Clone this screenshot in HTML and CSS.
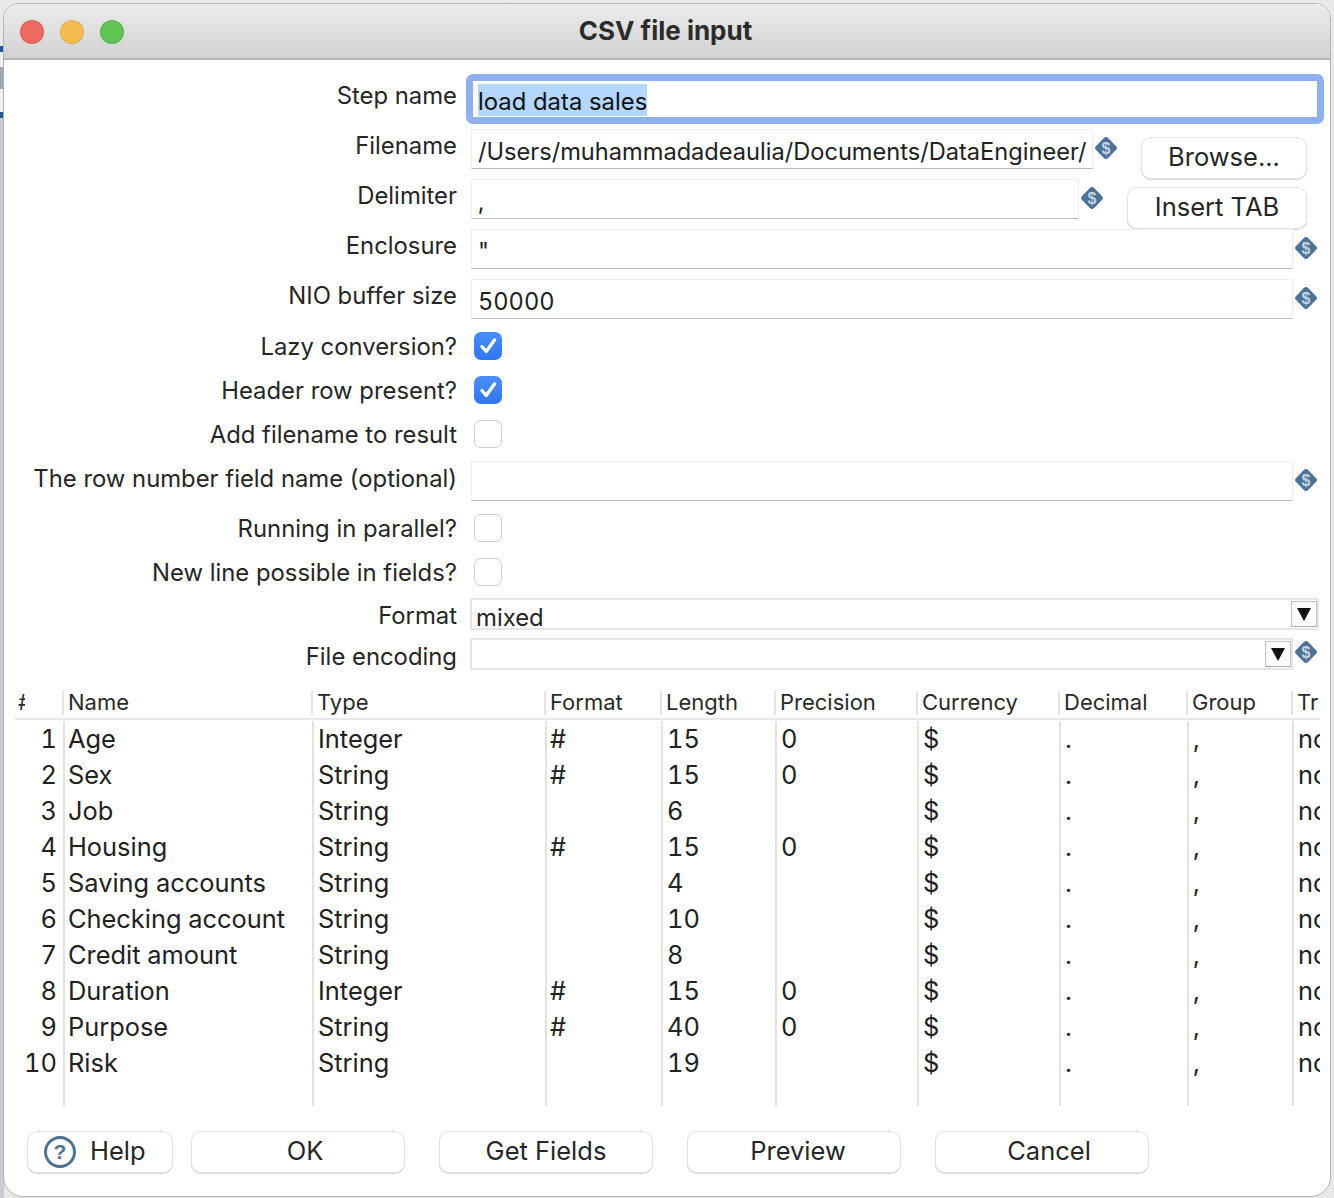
FILE: index.html
```html
<!DOCTYPE html>
<html lang="en">
<head>
<meta charset="utf-8">
<title>CSV file input</title>
<link rel="stylesheet" href="styles.css">
</head>
<body>
<div class="backdrop"><i class="bd-blue bd-a"></i><i class="bd-gray bd-b"></i><i class="bd-blue bd-c"></i><i class="bd-rest"></i></div>
<main class="window">
  <header class="titlebar">
    <div class="lights"><span class="light red"></span><span class="light yellow"></span><span class="light green"></span></div>
    <h1 class="title">CSV file input</h1>
  </header>
  <form class="form">
    <div class="row row-text">
      <label class="label">Step name</label>
      <div class="focus-ring"><span class="selected">load data sales</span></div>
    </div>
    <div class="row row-text row-btn">
      <label class="label">Filename</label>
      <div class="input">/Users/muhammadadeaulia/Documents/DataEngineer/</div>
      <svg class="var-icon" viewBox="0 0 26 26"><rect x="4.5" y="4.5" width="17" height="17" rx="3" transform="rotate(45 13 13)" fill="#4c7297"/><text x="13" y="18.6" text-anchor="middle" class="var-s">$</text></svg>
      <button type="button" class="btn btn-browse">Browse...</button>
    </div>
    <div class="row row-text row-btn">
      <label class="label">Delimiter</label>
      <div class="input">,</div>
      <svg class="var-icon" viewBox="0 0 26 26"><rect x="4.5" y="4.5" width="17" height="17" rx="3" transform="rotate(45 13 13)" fill="#4c7297"/><text x="13" y="18.6" text-anchor="middle" class="var-s">$</text></svg>
      <button type="button" class="btn btn-tab">Insert TAB</button>
    </div>
    <div class="row row-text">
      <label class="label">Enclosure</label>
      <div class="input">"</div>
      <svg class="var-icon" viewBox="0 0 26 26"><rect x="4.5" y="4.5" width="17" height="17" rx="3" transform="rotate(45 13 13)" fill="#4c7297"/><text x="13" y="18.6" text-anchor="middle" class="var-s">$</text></svg>
    </div>
    <div class="row row-text row-last">
      <label class="label">NIO buffer size</label>
      <div class="input">50000</div>
      <svg class="var-icon" viewBox="0 0 26 26"><rect x="4.5" y="4.5" width="17" height="17" rx="3" transform="rotate(45 13 13)" fill="#4c7297"/><text x="13" y="18.6" text-anchor="middle" class="var-s">$</text></svg>
    </div>
    <div class="row row-check">
      <label class="label">Lazy conversion?</label>
      <span class="check on"><svg viewBox="0 0 28 28"><path d="M8 14.5l4.2 5L20.5 8" fill="none" stroke="#fff" stroke-width="3.4" stroke-linecap="round" stroke-linejoin="round"/></svg></span>
    </div>
    <div class="row row-check">
      <label class="label">Header row present?</label>
      <span class="check on"><svg viewBox="0 0 28 28"><path d="M8 14.5l4.2 5L20.5 8" fill="none" stroke="#fff" stroke-width="3.4" stroke-linecap="round" stroke-linejoin="round"/></svg></span>
    </div>
    <div class="row row-check">
      <label class="label">Add filename to result</label>
      <span class="check"></span>
    </div>
    <div class="row row-text row-solo">
      <label class="label">The row number field name (optional)</label>
      <div class="input"></div>
      <svg class="var-icon" viewBox="0 0 26 26"><rect x="4.5" y="4.5" width="17" height="17" rx="3" transform="rotate(45 13 13)" fill="#4c7297"/><text x="13" y="18.6" text-anchor="middle" class="var-s">$</text></svg>
    </div>
    <div class="row row-check">
      <label class="label">Running in parallel?</label>
      <span class="check"></span>
    </div>
    <div class="row row-check">
      <label class="label">New line possible in fields?</label>
      <span class="check"></span>
    </div>
    <div class="row row-select row-format">
      <label class="label">Format</label>
      <div class="select"><span class="select-value">mixed</span><span class="arrow"></span></div>
    </div>
    <div class="row row-select">
      <label class="label">File encoding</label>
      <div class="select"><span class="select-value"></span><span class="arrow"></span></div>
      <svg class="var-icon" viewBox="0 0 26 26"><rect x="4.5" y="4.5" width="17" height="17" rx="3" transform="rotate(45 13 13)" fill="#4c7297"/><text x="13" y="18.6" text-anchor="middle" class="var-s">$</text></svg>
    </div>
  </form>
  <section class="grid-wrap">
    <table class="grid">
      <colgroup><col class="c-n"><col class="c-name"><col class="c-type"><col class="c-format"><col class="c-length"><col class="c-prec"><col class="c-cur"><col class="c-dec"><col class="c-group"><col class="c-tr"></colgroup>
      <thead>
        <tr>
          <th><div class="th-in"><span class="hash">#</span></div></th><th><div class="th-in">Name</div></th><th><div class="th-in">Type</div></th><th><div class="th-in">Format</div></th><th><div class="th-in">Length</div></th><th><div class="th-in">Precision</div></th><th><div class="th-in">Currency</div></th><th><div class="th-in">Decimal</div></th><th><div class="th-in">Group</div></th><th><div class="th-in">Tr</div></th>
        </tr>
      </thead>
      <tbody>
        <tr><td class="num">1</td><td>Age</td><td>Integer</td><td>#</td><td>15</td><td>0</td><td>$</td><td>.</td><td>,</td><td>none</td></tr>
        <tr><td class="num">2</td><td>Sex</td><td>String</td><td>#</td><td>15</td><td>0</td><td>$</td><td>.</td><td>,</td><td>none</td></tr>
        <tr><td class="num">3</td><td>Job</td><td>String</td><td></td><td>6</td><td></td><td>$</td><td>.</td><td>,</td><td>none</td></tr>
        <tr><td class="num">4</td><td>Housing</td><td>String</td><td>#</td><td>15</td><td>0</td><td>$</td><td>.</td><td>,</td><td>none</td></tr>
        <tr><td class="num">5</td><td>Saving accounts</td><td>String</td><td></td><td>4</td><td></td><td>$</td><td>.</td><td>,</td><td>none</td></tr>
        <tr><td class="num">6</td><td>Checking account</td><td>String</td><td></td><td>10</td><td></td><td>$</td><td>.</td><td>,</td><td>none</td></tr>
        <tr><td class="num">7</td><td>Credit amount</td><td>String</td><td></td><td>8</td><td></td><td>$</td><td>.</td><td>,</td><td>none</td></tr>
        <tr><td class="num">8</td><td>Duration</td><td>Integer</td><td>#</td><td>15</td><td>0</td><td>$</td><td>.</td><td>,</td><td>none</td></tr>
        <tr><td class="num">9</td><td>Purpose</td><td>String</td><td>#</td><td>40</td><td>0</td><td>$</td><td>.</td><td>,</td><td>none</td></tr>
        <tr><td class="num">10</td><td>Risk</td><td>String</td><td></td><td>19</td><td></td><td>$</td><td>.</td><td>,</td><td>none</td></tr>
        <tr class="filler"><td></td><td></td><td></td><td></td><td></td><td></td><td></td><td></td><td></td><td></td></tr>
      </tbody>
    </table>
  </section>
  <footer class="actions">
    <button type="button" class="btn btn-help"><svg class="help-icon" viewBox="0 0 34 34"><circle cx="17" cy="17" r="14.5" fill="#fff" stroke="#4c7297" stroke-width="3"/><text x="17" y="24" text-anchor="middle" class="help-q">?</text></svg><span class="help-text">Help</span></button>
    <button type="button" class="btn btn-act btn-ok">OK</button>
    <button type="button" class="btn btn-act">Get Fields</button>
    <button type="button" class="btn btn-act btn-preview">Preview</button>
    <button type="button" class="btn btn-act btn-ok">Cancel</button>
  </footer>
</main>
</body>
</html>
```
FILE: styles.css
```css
* { box-sizing: border-box; }
html, body { margin: 0; padding: 0; }
body {
  position: relative;
  width: 1334px;
  height: 1198px;
  overflow: hidden;
  background: #e9e9e9;
  font-family: Inter, "Liberation Sans", sans-serif;
  font-size: 23.85px;
  color: #262626;
}
.backdrop { position: absolute; left: 0; top: 0; width: 4px; height: 1198px; display: flex; flex-direction: column; }
.backdrop i { display: block; }
.bd-blue { height: 6px; background: #1f5a9e; }
.bd-a { margin-top: 46px; }
.bd-b { height: 60px; background: linear-gradient(#f0f0f0 25%, #9aa8b6 25%, #9aa8b6 62%, #f0f0f0 62%); }
.bd-rest { flex: 1; background: #c9ccd0; }

.window {
  position: absolute;
  left: 3px;
  top: 3px;
  width: 1328px;
  height: 1194px;
  background: #fff;
  border: 1px solid #b4b4b4;
  border-radius: 15px 15px 20px 20px;
  overflow: hidden;
  display: flex;
  flex-direction: column;
}
.titlebar {
  flex: none;
  height: 56px;
  display: flex;
  align-items: center;
  justify-content: center;
  background: linear-gradient(#ececec, #d2d2d2);
  border-bottom: 2px solid #b8b8b8;
  position: relative;
}
.lights { position: absolute; left: 16px; top: 16px; display: flex; gap: 16px; }
.light { width: 24px; height: 24px; border-radius: 50%; border: 1px solid rgba(0,0,0,.1); }
.red { background: #ee6a5f; }
.yellow { background: #f5bd4f; }
.green { background: #61c454; }
.title { margin: 0 3px 1px 0; font-size: 26px; font-weight: 700; color: #2c2c2c; }

.form { flex: none; padding: 19px 0 0; display: flex; flex-direction: column; }
.row { display: flex; align-items: flex-start; }
.label { flex: none; width: 453px; text-align: right; white-space: nowrap; }
.row-text { height: 40px; margin-bottom: 10px; }
.row-text .label { line-height: 34px; }
.row-last { margin-bottom: 5px; }
.row-solo { margin-top: 5px; margin-bottom: 5px; }
.row-text.row-solo .label { line-height: 36px; }
.row-check { height: 44px; align-items: center; }
.row-select { height: 32px; margin-bottom: 8px; }
.row-format { margin-top: 4px; }
.row-select .label { line-height: 36px; }
.row-select:last-child .label { line-height: 38px; }

.input {
  flex: 1;
  min-width: 0;
  height: 40px;
  margin-left: 14px;
  padding: 4px 0 0 6px;
  font-size: 23.62px;
  font-variant-numeric: tabular-nums;
  line-height: 36px;
  white-space: nowrap;
  overflow: hidden;
  border: 1px solid #efefef;
  border-bottom: 1px solid #bcbcbc;
  color: #222;
}
.focus-ring {
  width: 858px;
  height: 50px;
  margin: -5px 0 0 9px;
  padding: 3px 0 0 5px;
  border: 7px solid #8fb0f0;
  border-radius: 7px;
  line-height: 32px;
  color: #111;
}
.selected { display: inline-block; height: 32px; line-height: 36px; background: #b3d7ff; vertical-align: top; }
.var-icon { flex: none; width: 26px; height: 26px; margin-top: 6px; }
.row-text .var-icon { margin-right: 11px; }
.var-s { font: 700 16px "Liberation Sans", sans-serif; fill: #c4d3e0; }
.row-btn .var-icon { margin-top: 6px; margin-right: 22px; }

.check {
  flex: none;
  width: 28px;
  height: 28px;
  margin-left: 17px;
  border: 1px solid #cfcfcf;
  border-radius: 7px;
  background: #fff;
  display: flex;
}
.check.on { border: 0; background: linear-gradient(#4b8dfb, #2f76f6); }
.check svg { width: 28px; height: 28px; }

.select {
  flex: 1;
  min-width: 0;
  height: 32px;
  margin-left: 13px;
  margin-right: 11px;
  border: 2px solid #e6e6e6;
  display: flex;
  justify-content: space-between;
  align-items: center;
}
.row-select:last-child .select { margin-right: 0; }
.row-select:last-child .var-icon { margin-top: 1px; margin-right: 11px; }
.select-value { padding: 4px 0 0 4px; line-height: 28px; height: 28px; }
.arrow {
  flex: none;
  position: relative;
  width: 26px;
  height: 26px;
  background: #fbfbfb;
  border: 1px solid #c4c4c4;
  border-bottom-color: #aaa;
}
.arrow::after {
  content: "";
  position: absolute;
  left: 5px;
  top: 6px;
  border-left: 7px solid transparent;
  border-right: 7px solid transparent;
  border-top: 13px solid #111;
}

.grid-wrap { flex: none; margin: 12px 0 0 11px; width: 1305px; overflow: hidden; }
.grid { table-layout: fixed; width: 1305px; border-collapse: collapse; }
.c-n { width: 49px; } .c-name { width: 249px; } .c-type { width: 233px; } .c-format { width: 116px; }
.c-length { width: 114px; } .c-prec { width: 142px; } .c-cur { width: 142px; } .c-dec { width: 128px; }
.c-group { width: 105px; } .c-tr { width: 27px; }
th {
  padding: 0;
  height: 31px;
  font-weight: 400;
  font-size: 22px;
  text-align: left;
  vertical-align: top;
  background: linear-gradient(#e8e8e8, #e8e8e8) 0 28px / 100% 2px no-repeat;
}
.th-in { height: 24px; margin-top: 1px; padding-left: 4px; line-height: 22px; border-right: 2px solid #e4e4e4; white-space: nowrap; color: #2a2a2a; }
th:last-child .th-in { border-right: 0; }
.hash { display: inline-block; width: 7px; height: 24px; margin-left: -1px; overflow: hidden; vertical-align: top; }
td { height: 36px; padding: 0 0 0 4px; font-size: 25.4px; font-variant-numeric: tabular-nums; line-height: 36px; border-right: 2px solid #e2e2e2; white-space: nowrap; overflow: hidden; color: #222; }
td:nth-child(2), td:nth-child(4) { padding-left: 3px; }
td:last-child { border-right: 0; }
td.num { text-align: right; padding: 0 6px 0 0; }
.filler td { height: 25px; }

.actions { flex: none; margin-top: 25px; padding-left: 23px; display: flex; align-items: flex-start; }
.btn {
  font: inherit;
  font-size: 25.5px;
  color: #262626;
  height: 42px;
  padding: 0 0 4px;
  background: #fff;
  border: 1px solid #e4e4e4;
  border-radius: 10px;
  box-shadow: 0 1px 1px rgba(0,0,0,.18);
  white-space: nowrap;
}
.btn-browse { flex: none; width: 166px; margin: 8px 23px 0 0; }
.btn-tab { flex: none; width: 180px; margin: 8px 23px 0 0; }
.btn-help { width: 146px; display: flex; align-items: center; gap: 13px; padding: 0 0 0 15px; margin-right: 18px; }
.help-text { margin-bottom: 4px; }
.help-icon { width: 34px; height: 34px; flex: none; }
.help-q { font: 700 21px "Liberation Sans", sans-serif; fill: #4c7297; }
.btn-act { width: 214px; margin-right: 34px; }
.btn-ok { padding-left: 14px; }
.btn-preview { padding-left: 8px; }
```
